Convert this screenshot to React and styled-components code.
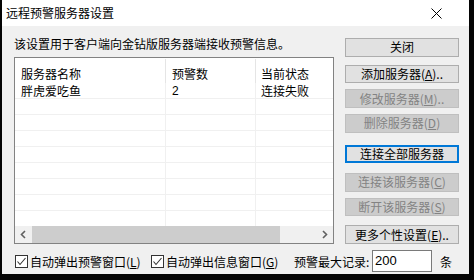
import styled, { createGlobalStyle } from 'styled-components';

const Global = createGlobalStyle`
  html, body { margin: 0; padding: 0; background: #050505; }
  body { font-family: "Noto Sans CJK SC", "Liberation Sans", sans-serif; font-size: 12px; color: #000; }
`;

const Page = styled.div`
  width: 474px;
  height: 280px;
  overflow: hidden;
`;

const Dialog = styled.div`
  margin-left: 2px;
  width: 467px;
  height: 274px;
  background: #f0f0f0;
  display: flex;
  flex-direction: column;
`;

const TitleBar = styled.div`
  height: 26px;
  background: #fff;
  display: flex;
  align-items: center;
  justify-content: space-between;
  padding-left: 4px;
  padding-right: 27px;
`;

const Title = styled.span`
  font-size: 12px;
  line-height: 14px;
  letter-spacing: 0;
`;

const Body = styled.div`
  flex: 1;
  padding: 0 10px 0 12px;
  display: flex;
  flex-direction: column;
`;

const Top = styled.div`
  height: 218px;
  display: flex;
`;

const LeftCol = styled.div`
  width: 320px;
  display: flex;
  flex-direction: column;
`;

const Desc = styled.div`
  margin-top: 11px;
  line-height: 14px;
  white-space: nowrap;
`;

const List = styled.div`
  margin-top: 6px;
  height: 187px;
  box-sizing: border-box;
  border: 1px solid #828282;
  background: #fff;
  display: flex;
  flex-direction: column;
  overflow: hidden;
`;

const HeaderRow = styled.div`
  display: flex;
  height: 25px;
  flex: none;
`;

const HeadCell = styled.div`
  width: ${p => p.$w}px;
  flex: none;
  box-sizing: border-box;
  padding: 8px 0 0 ${p => p.$pl || 6}px;
  line-height: 14px;
  border-right: ${p => (p.$last ? 'none' : '1px solid #e5e5e5')};
  margin-top: 1px;
  white-space: nowrap;
`;

const Rows = styled.div`
  flex: 1;
  overflow: hidden;
`;

const Row = styled.div`
  display: flex;
  height: 16px;
  box-sizing: border-box;
  border-bottom: 1px solid #f0f0f0;
`;

const Cell = styled.div`
  width: ${p => p.$w}px;
  flex: none;
  box-sizing: border-box;
  padding-left: ${p => p.$pl || 6}px;
  line-height: 16px;
  border-right: ${p => (p.$last ? 'none' : '1px solid #f0f0f0')};
  white-space: nowrap;
  font-family: ${p => (p.$num ? '"Liberation Sans", sans-serif' : 'inherit')};
`;

const ScrollBar = styled.div`
  height: 17px;
  flex: none;
  display: flex;
  background: #f0f0f0;
`;

const Arrow = styled.div`
  width: 17px;
  display: flex;
  align-items: center;
  justify-content: center;
`;

const Track = styled.div`
  flex: 1;
  display: flex;
`;

const Thumb = styled.div`
  width: 248px;
  background: #cdcdcd;
`;

const RightCol = styled.div`
  margin-left: 11px;
  width: 114px;
  display: flex;
  flex-direction: column;
`;

const Btn = styled.div`
  margin-top: ${p => p.$mt}px;
  height: 19px;
  box-sizing: border-box;
  display: flex;
  align-items: center;
  justify-content: center;
  white-space: nowrap;
  line-height: 14px;
  background: ${p => (p.$disabled ? '#cccccc' : '#e1e1e1')};
  border: ${p => (p.$focus ? '2px solid #0078d7' : p.$disabled ? '1px solid #bfbfbf' : '1px solid #adadad')};
  color: ${p => (p.$disabled ? '#838383' : '#000')};
  u { text-underline-offset: 1px; }
`;

const Bottom = styled.div`
  margin-top: 6px;
  height: 22px;
  display: flex;
  align-items: center;
`;

const CheckGroup = styled.div`
  width: ${p => p.$w}px;
  margin-left: ${p => p.$ml || 0}px;
  display: flex;
  align-items: center;
  white-space: nowrap;
  u { text-underline-offset: 1px; }
`;

const Box = styled.div`
  width: 13px;
  height: 13px;
  box-sizing: border-box;
  border: 1px solid #333;
  background: #fff;
  margin-right: 2px;
  display: flex;
  align-items: center;
  justify-content: center;
`;

const Label = styled.span`
  width: 78px;
  white-space: nowrap;
`;

const Input = styled.div`
  width: 60px;
  height: 22px;
  box-sizing: border-box;
  border: 1px solid #7a7a7a;
  background: #fff;
  padding-left: 2px;
  line-height: 20px;
  font-family: "Liberation Sans", sans-serif;
  font-size: 13px;
`;

const Unit = styled.span`
  margin-left: 8px;
`;

function Check({ children, w, ml }) {
  return (
    <CheckGroup $w={w} $ml={ml}>
      <Box>
        <svg width="11" height="11" viewBox="0 0 11 11">
          <path d="M1.5 5.5 L4 8.5 L9.5 2" fill="none" stroke="#333" strokeWidth="1.1" />
        </svg>
      </Box>
      <span>{children}</span>
    </CheckGroup>
  );
}

const emptyRows = [1, 2, 3, 4, 5, 6, 7, 8];

export default function App() {
  return (
    <Page>
      <Global />
      <Dialog>
        <TitleBar>
          <Title>远程预警服务器设置</Title>
          <svg width="11" height="11" viewBox="0 0 11 11">
            <path d="M0.5 0.5 L10.5 10.5 M10.5 0.5 L0.5 10.5" stroke="#000" strokeWidth="1" />
          </svg>
        </TitleBar>
        <Body>
          <Top>
            <LeftCol>
              <Desc>该设置用于客户端向金钻版服务器端接收预警信息。</Desc>
              <List>
                <HeaderRow>
                  <HeadCell $w={151}>服务器名称</HeadCell>
                  <HeadCell $w={90}>预警数</HeadCell>
                  <HeadCell $w={80} $pl={5} $last>当前状态</HeadCell>
                </HeaderRow>
                <Rows>
                  <Row>
                    <Cell $w={151}>胖虎爱吃鱼</Cell>
                    <Cell $w={90} $num>2</Cell>
                    <Cell $w={80} $pl={5} $last>连接失败</Cell>
                  </Row>
                  {emptyRows.map(r => (
                    <Row key={r}>
                      <Cell $w={151} />
                      <Cell $w={90} />
                      <Cell $w={80} $last />
                    </Row>
                  ))}
                </Rows>
                <ScrollBar>
                  <Arrow>
                    <svg width="7" height="9" viewBox="0 0 7 9">
                      <path d="M5 1 L1.5 4.5 L5 8" fill="none" stroke="#606060" strokeWidth="1.6" />
                    </svg>
                  </Arrow>
                  <Track>
                    <Thumb />
                  </Track>
                  <Arrow>
                    <svg width="7" height="9" viewBox="0 0 7 9">
                      <path d="M2 1 L5.5 4.5 L2 8" fill="none" stroke="#606060" strokeWidth="1.6" />
                    </svg>
                  </Arrow>
                </ScrollBar>
              </List>
            </LeftCol>
            <RightCol>
              <Btn $mt={12}>关闭</Btn>
              <Btn $mt={8}>添加服务器(<u>A</u>)..</Btn>
              <Btn $mt={6} $disabled>修改服务器(<u>M</u>)..</Btn>
              <Btn $mt={6} $disabled>删除服务器(<u>D</u>)</Btn>
              <Btn $mt={12} $focus>连接全部服务器</Btn>
              <Btn $mt={10} $disabled>连接该服务器(<u>C</u>)</Btn>
              <Btn $mt={6} $disabled>断开该服务器(<u>S</u>)</Btn>
              <Btn $mt={9}>更多个性设置(<u>E</u>)..</Btn>
            </RightCol>
          </Top>
          <Bottom>
            <Check w={136} ml={1}>自动弹出预警窗口(<u>L</u>)</Check>
            <Check w={143}>自动弹出信息窗口(<u>G</u>)</Check>
            <Label>预警最大记录:</Label>
            <Input>200</Input>
            <Unit>条</Unit>
          </Bottom>
        </Body>
      </Dialog>
    </Page>
  );
}
